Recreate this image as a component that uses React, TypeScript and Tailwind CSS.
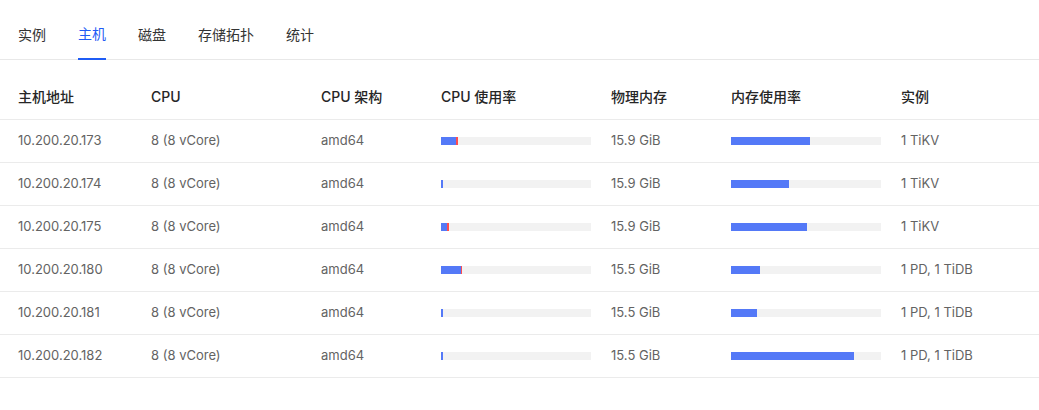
import React from "react";

const tabs = ["实例", "主机", "磁盘", "存储拓扑", "统计"];

const hosts = [
  { addr: "10.200.20.173", mem: "15.9 GiB", cpu: [15, 2], memUsed: 79, inst: "1 TiKV" },
  { addr: "10.200.20.174", mem: "15.9 GiB", cpu: [2, 0], memUsed: 58, inst: "1 TiKV" },
  { addr: "10.200.20.175", mem: "15.9 GiB", cpu: [6, 2], memUsed: 76, inst: "1 TiKV" },
  { addr: "10.200.20.180", mem: "15.5 GiB", cpu: [20, 1], memUsed: 29, inst: "1 PD, 1 TiDB" },
  { addr: "10.200.20.181", mem: "15.5 GiB", cpu: [2, 0], memUsed: 26, inst: "1 PD, 1 TiDB" },
  { addr: "10.200.20.182", mem: "15.5 GiB", cpu: [2, 0], memUsed: 123, inst: "1 PD, 1 TiDB" },
];

const Bar = ({ blue, red = 0 }: { blue: number; red?: number }) => (
  <div className="flex h-2 w-[150px] bg-[#f2f2f2]">
    <div className="h-full bg-[#5479f7]" style={{ width: blue }} />
    {red > 0 && <div className="h-full bg-[#ff4d4f]" style={{ width: red }} />}
  </div>
);

export default function App() {
  return (
    <div className="w-[1039px] h-[410px] bg-white font-['Inter','Noto_Sans_CJK_SC',sans-serif]">
      <div className="flex gap-8 pl-[18px] h-[60px] border-b border-[#e8e8e8]">
        {tabs.map((t) => (
          <div
            key={t}
            className={
              t === "主机"
                ? "flex items-center text-sm text-[#1f5cf5] border-b-2 border-[#1f5cf5] -mb-px pt-[10px]"
                : "flex items-center text-sm text-[#333] pt-[10px]"
            }
          >
            {t}
          </div>
        ))}
      </div>
      <table className="mt-[15px] w-full table-fixed border-collapse text-left">
        <colgroup>
          <col className="w-[133px]" />
          <col className="w-[170px]" />
          <col className="w-[120px]" />
          <col className="w-[170px]" />
          <col className="w-[120px]" />
          <col className="w-[170px]" />
          <col />
        </colgroup>
        <thead>
          <tr className="h-[44px] border-b border-[#ebebeb] text-sm text-[#262626]">
            {["主机地址", "CPU", "CPU 架构", "CPU 使用率", "物理内存", "内存使用率", "实例"].map((h) => (
              <th key={h} className="pl-[18px] font-medium">
                {h}
              </th>
            ))}
          </tr>
        </thead>
        <tbody className="text-[13px] text-[#636363]">
          {hosts.map((h) => (
            <tr key={h.addr} className="h-[43px] border-b border-[#ebebeb]">
              <td className="pl-[18px]">{h.addr}</td>
              <td className="pl-[18px]">8 (8 vCore)</td>
              <td className="pl-[18px]">amd64</td>
              <td className="pl-[18px]">
                <Bar blue={h.cpu[0]} red={h.cpu[1]} />
              </td>
              <td className="pl-[18px]">{h.mem}</td>
              <td className="pl-[18px]">
                <Bar blue={h.memUsed} />
              </td>
              <td className="pl-[18px]">{h.inst}</td>
            </tr>
          ))}
        </tbody>
      </table>
    </div>
  );
}
